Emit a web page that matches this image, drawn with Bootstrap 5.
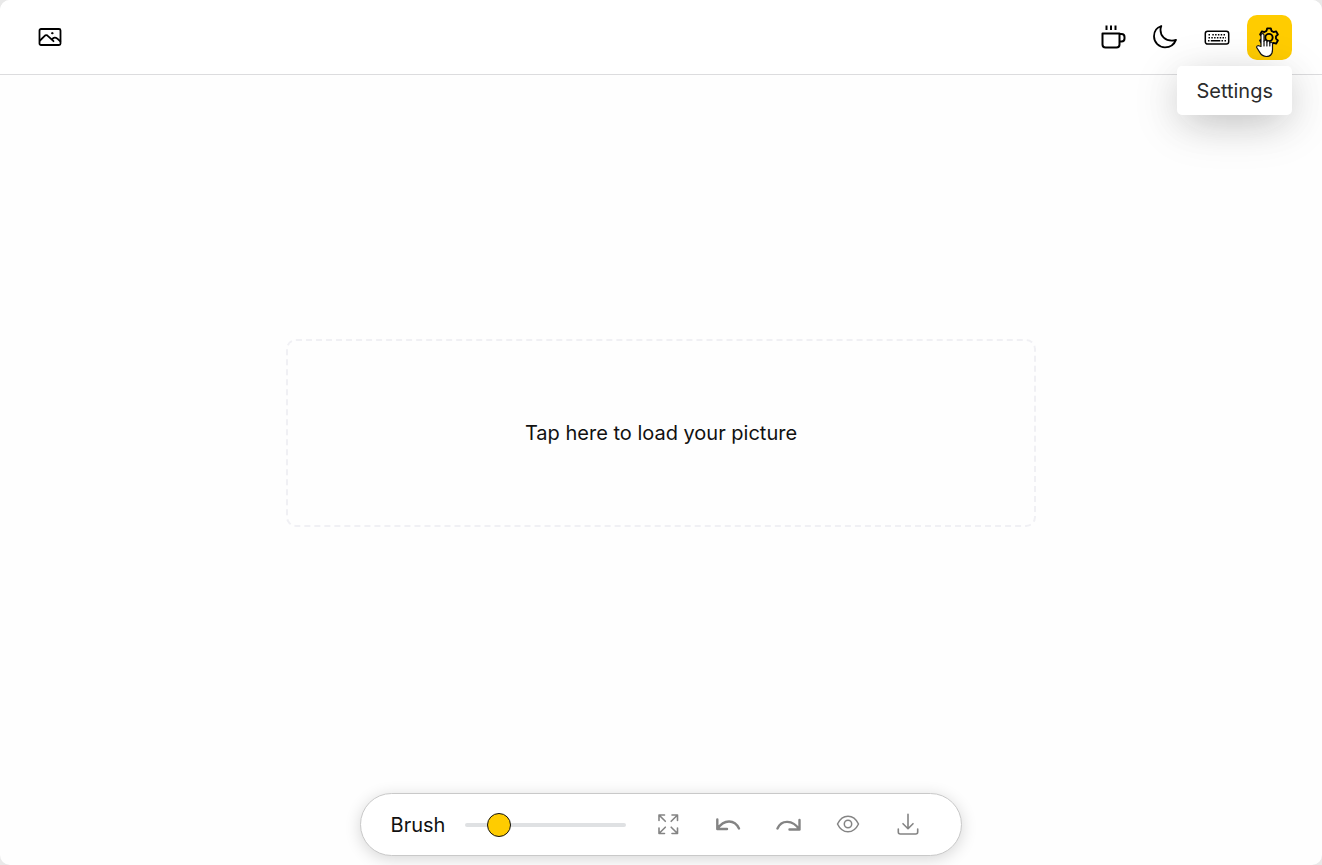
<!DOCTYPE html>
<html lang="en">
<head>
<meta charset="utf-8">
<meta name="viewport" content="width=device-width, initial-scale=1">
<title>Picture cleanup</title>
<link href="https://cdn.jsdelivr.net/npm/bootstrap@5.3.0/dist/css/bootstrap.min.css" rel="stylesheet">
<style>
  html { background: #e9e9e9; }
  body { font-family: Inter, "Liberation Sans", sans-serif; font-size: 20px; line-height: 30px; color: #111; background: #e9e9e9; }
  .app { background: #fefefe; border-radius: 10px; overflow: hidden; }
  .topbar { padding: 15px 30px 14px 28px; border-bottom: 1px solid #dcdcde; background: #fff; }
  .tools { gap: 7px; }
  .icon-btn { width: 45px; height: 45px; padding: 0 1px 1px 0; border: 0; border-radius: 10px; color: #000; }
  .icon-btn:hover, .icon-btn.active { background: #ffcc00 !important; color: #000; }
  .icon-btn svg, .pointer { display: block; fill: none; stroke: currentColor; stroke-linecap: round; stroke-linejoin: round; }
  .tip { top: 51px; right: 0; padding: 10px 19px 9px; border-radius: 5px; background: #fff; color: #2c2c2c; box-shadow: 0 10px 38px -10px rgba(22,23,24,.25), 0 10px 50px rgba(22,23,24,.12); z-index: 2; }
  .pointer { left: 9px; top: 17px; z-index: 3; pointer-events: none; }
  .workspace { padding: 0 16px 2px; }
  .dropzone { width: 100%; max-width: 750px; height: 188px; border: 2px dashed #f0f0f4; border-radius: 10px; cursor: pointer; }
  .dock { padding: 0 10px 9px; }
  .toolbar { padding: 8px 30px; gap: 15px; border: 1px solid #c9c9c9; border-radius: 32px; background: #fff; box-shadow: 0 3px 16px rgba(0,0,0,.16); }
  .toolbar .icon-btn { border: 0; color: #848484; opacity: 1; }
  .brush { gap: 20px; margin-right: 5px; }
  .brush-size { width: 161px; height: 24px; appearance: none; background: transparent; margin: 0; }
  .brush-size::-webkit-slider-runnable-track { height: 4px; border-radius: 2px; background: #dfe1e3; }
  .brush-size::-webkit-slider-thumb { appearance: none; width: 24px; height: 24px; margin-top: -10px; border: 1px solid #111; border-radius: 50%; background: #ffcc00; }
</style>
</head>
<body>
<div class="app d-flex flex-column min-vh-100">
  <header class="topbar d-flex justify-content-between align-items-center">
    <button class="btn icon-btn d-flex align-items-center justify-content-center" type="button" aria-label="Load image">
      <svg width="24" height="24" viewBox="0 0 24 24" stroke-width="1.800"><rect x="1.500" y="4" width="21" height="16" rx="1.500"/><path d="M2 15.500l4.200-4.200c1.500-1.500 2.600-1.500 4.100 0L15.500 16.200M14 14.300c1.800-2.200 3.500-2.200 5.300-.6l3 2.600"/><circle cx="14.200" cy="8.200" r=".7" fill="currentColor" stroke-width="1"/></svg>
    </button>
    <nav class="tools d-flex align-items-center" aria-label="Tools">
      <button class="btn icon-btn d-flex align-items-center justify-content-center" type="button" aria-label="Buy a coffee">
        <svg width="26" height="26" viewBox="0 0 26 26" stroke-width="2"><path d="M2.500 9.500h17v11a3 3 0 0 1-3 3h-11a3 3 0 0 1-3-3zM20 10h1.500a3 3 0 0 1 3 3v1.500a3 3 0 0 1-3 3H20"/><path d="M6.500 1.500v4.500M11 1.500v4.500M15.500 1.500v4.500" stroke-linecap="butt"/></svg>
      </button>
      <button class="btn icon-btn d-flex align-items-center justify-content-center" type="button" aria-label="Dark mode">
        <svg width="26" height="26" viewBox="0 0 26 26" stroke-width="1.800"><path d="M9.300 2C4.700 3.500 2 7.500 2 12.300c0 6.200 5 11 11 11 5 0 9.300-3 11-7.400-1.500.6-2.700.8-4.200.8-6.500 0-11.300-4.500-11.300-10.700 0-1.500.2-2.700.8-4z"/></svg>
      </button>
      <button class="btn icon-btn d-flex align-items-center justify-content-center" type="button" aria-label="Keyboard shortcuts">
        <svg width="26" height="26" viewBox="0 0 26 26" stroke-width="1.500"><rect x="1.300" y="7.300" width="23.400" height="12.800" rx="2.300"/><g stroke-width="1.500" stroke-linecap="butt"><path d="M4.500 10.800h2.500M8.300 10.800h13.500" stroke-dasharray="1.500 1.300 1.500 1.300"/><path d="M4.500 13.800h17.500" stroke-dasharray="1.500 1.300"/><path d="M4 16.800h1.500M6.800 16.800h9.500M17.500 16.800h1.500M20.500 16.800h1.500"/></g></svg>
      </button>
      <div class="position-relative">
        <button class="btn icon-btn active d-flex align-items-center justify-content-center" type="button" aria-label="Settings" aria-describedby="settings-tip">
          <svg width="22" height="22" viewBox="0 0 24 24" stroke-width="2"><path d="M10 2.500h4l.7 2.800 2.200 1.300 2.800-.8 2 3.500-2.100 2v2.500l2.100 2-2 3.500-2.800-.8-2.200 1.300-.7 2.800h-4l-.7-2.800-2.200-1.300-2.800.8-2-3.500 2.100-2v-2.500l-2.100-2 2-3.500 2.800.8 2.200-1.300z"/><circle cx="12" cy="12.500" r="4"/></svg>
        </button>
        <div id="settings-tip" class="tip position-absolute text-nowrap" role="tooltip">Settings</div>
        <svg class="pointer position-absolute" width="20" height="26" viewBox="0 0 20 26" aria-hidden="true"><path d="M5 14.500V3.200c0-2.200 3-2.200 3 0v6c0-1.500 2.900-1.500 2.900.3v.5c0-1.500 2.900-1.400 2.900.4v.6c.3-1.300 2.700-1.200 2.700.7v6.100c0 4.200-2.500 6.700-6.200 6.700-3.200 0-5-1.500-6.500-4.100L1 16c-1-1.800 1-3.200 2.500-2z" fill="#fff" stroke="#111" stroke-width="1.200"/><path d="M8 9v5M10.900 10v4M13.800 11v3" stroke="#111" stroke-width="1.200"/></svg>
      </div>
    </nav>
  </header>

  <main class="workspace flex-grow-1 d-flex align-items-center justify-content-center">
    <label class="dropzone d-flex align-items-center justify-content-center text-center" for="picture">
      Tap here to load your picture
      <input class="visually-hidden" id="picture" type="file" accept="image/*">
    </label>
  </main>

  <footer class="dock d-flex justify-content-center">
    <div class="toolbar d-flex flex-wrap align-items-center justify-content-center">
      <div class="brush d-flex align-items-center">
        <label for="brush-size">Brush</label>
        <input class="brush-size" id="brush-size" type="range" min="0" max="100" value="16">
      </div>
      <button class="btn icon-btn d-flex align-items-center justify-content-center" type="button" aria-label="Reset zoom">
        <svg width="24" height="24" viewBox="0 0 24 24" stroke-width="1.600"><path d="M3 8.500V3h5.500M3 3l6.300 6.300M16 3h5.500v5.500M21.500 3l-6.300 6.300M3 16v5.500h5.500M3 21.500l6.300-6.300M21.500 16v5.500H16M21.500 21.500l-6.300-6.300"/></svg>
      </button>
      <button class="btn icon-btn d-flex align-items-center justify-content-center" type="button" aria-label="Undo">
        <svg width="26" height="24" viewBox="0 0 26 24" stroke-width="2.400"><path d="M2.300 7.500V17H12M2.300 17C9 7 19.500 7 24 16.500"/></svg>
      </button>
      <button class="btn icon-btn d-flex align-items-center justify-content-center" type="button" aria-label="Redo">
        <svg width="26" height="24" viewBox="0 0 26 24" stroke-width="2.400"><path d="M24.500 8v9.500H14.500M24.500 17.500C17.500 7.500 6.500 7.500 2.500 16.500"/></svg>
      </button>
      <button class="btn icon-btn d-flex align-items-center justify-content-center" type="button" aria-label="Show original">
        <svg width="24" height="24" viewBox="0 0 24 24" stroke-width="1.500"><path d="M1.500 12C4 6.700 7.500 4.200 12 4.200S20 6.700 22.500 12C20 17.300 16.500 19.800 12 19.800S4 17.300 1.500 12z"/><circle cx="12" cy="12" r="3.700"/></svg>
      </button>
      <button class="btn icon-btn d-flex align-items-center justify-content-center" type="button" aria-label="Download">
        <svg width="24" height="24" viewBox="0 0 24 24" stroke-width="1.600"><path d="M12 2.200v14.300M7 11.700l5 5 5-5M2.300 17v3a2 2 0 0 0 2 2h15.400a2 2 0 0 0 2-2v-3"/></svg>
      </button>
    </div>
  </footer>
</div>
<script src="https://cdn.jsdelivr.net/npm/bootstrap@5.3.0/dist/js/bootstrap.bundle.min.js"></script>
</body>
</html>
